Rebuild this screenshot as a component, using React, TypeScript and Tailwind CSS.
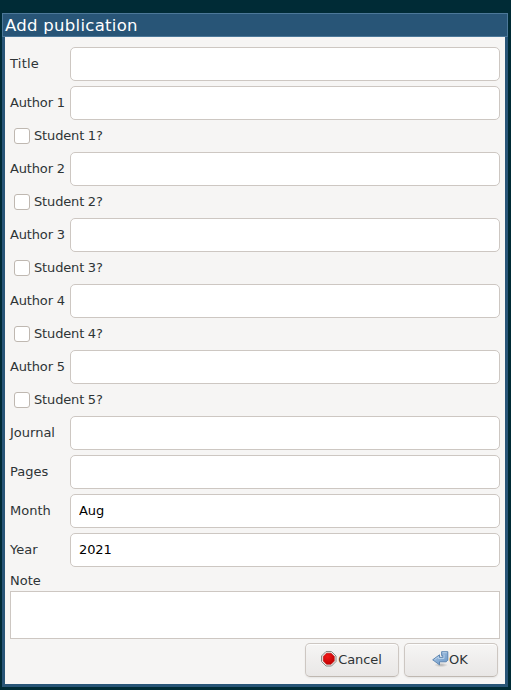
import type { ReactNode } from 'react';

function Field({ label, value = '', type = '' }: { label: string; value?: string; type?: string }) {
  return (
    <label className="flex h-[34px] items-center">
      <span className={`w-[60px] shrink-0 pb-0.5 whitespace-nowrap ${type}`}>{label}</span>
      <input
        className="h-[34px] min-w-0 flex-1 rounded-[5px] border border-[#cdc7c2] bg-white px-2 pb-0.5 tracking-[-0.1px] text-black outline-none"
        defaultValue={value}
      />
    </label>
  );
}

function Check({ label }: { label: string }) {
  return (
    <label className="flex h-[22px] items-center gap-1 pl-1">
      <input
        type="checkbox"
        className="size-4 appearance-none rounded-[3px] border border-[#bfb8b1] bg-white"
      />
      <span className="pb-0.5 tracking-[-0.15px] [word-spacing:-0.3px]">{label}</span>
    </label>
  );
}

function Button({ children }: { children: ReactNode }) {
  return (
    <button className="flex h-[34px] w-[94px] items-center justify-center rounded-[5px] border border-[#cdc7c2] border-b-[#bfb8b1] bg-linear-to-t from-[#e9e7e6] to-[#f6f5f4] pb-0.5 shadow-[inset_0_1px_#ffffffcc,0_1px_2px_#00000012]">
      {children}
    </button>
  );
}

function StopIcon() {
  return (
    <svg width="16" height="16" viewBox="0 0 16 16" className="mr-px">
      <defs>
        <radialGradient id="stop" cx=".38" cy=".3" r=".75">
          <stop offset="0" stopColor="#f01818" />
          <stop offset="1" stopColor="#c00000" />
        </radialGradient>
      </defs>
      <path d="M5 .5h5.5l4.5 4.5v5.5L10.5 15H5L.5 10.5V5Z" fill="#eeeeec" stroke="#888a85" />
      <path
        d="M5.5 2.2h4.6l3.2 3.2v4.7l-3.2 3.2H5.5l-3.2-3.2V5.4Z"
        fill="url(#stop)"
        stroke="#b81010"
        strokeWidth=".6"
      />
    </svg>
  );
}

function ReturnIcon() {
  return (
    <svg width="17" height="17" viewBox="0 0 17 17">
      <defs>
        <linearGradient id="ret" x1="0" y1="0" x2="1" y2="1">
          <stop offset="0" stopColor="#a9c5e3" />
          <stop offset="1" stopColor="#6b98c8" />
        </linearGradient>
        <radialGradient id="shade">
          <stop offset="0" stopColor="#000" stopOpacity=".25" />
          <stop offset="1" stopColor="#000" stopOpacity="0" />
        </radialGradient>
      </defs>
      <ellipse cx="9" cy="14" rx="7" ry="2.2" fill="url(#shade)" />
      <path
        d="M9.6.7h6.2v8.5l-1.6 1.6H7.5v3L.7 8.8l6.8-5v2.5h3.3V4.6H9.6Z"
        fill="url(#ret)"
        stroke="#5680ae"
        strokeWidth=".9"
      />
      <path d="M10.5 1.7h4.3M2.5 8.7l4-3v1.8h5.5V3.6" fill="none" stroke="#c3d7ec" strokeWidth=".8" />
    </svg>
  );
}

export default function App() {
  return (
    <div className="h-[690px] w-[511px] bg-[#002b36] px-0.5 pt-[13px] font-['DejaVu_Sans',sans-serif] text-[13px] leading-[15px] text-[#2e3436]">
      <div className="flex h-[674px] w-[506px] flex-col bg-[#285577]">
        <div className="h-6 shrink-0 border border-[#4c7899] pl-[2px] text-[16.5px] leading-[23px] tracking-[0.28px] text-white">
          Add publication
        </div>
        <div className="mx-[3px] mb-[3px] flex flex-1 flex-col gap-[5px] bg-[#f6f5f4] px-[5px] pt-[10px]">
          <Field label="Title" type="tracking-[0.25px]" />
          {[1, 2, 3, 4, 5].map((n) => (
            <div key={n} className="flex flex-col gap-[5px]">
              <Field label={`Author ${n}`} type="tracking-[-0.15px]" />
              <Check label={`Student ${n}?`} />
            </div>
          ))}
          <Field label="Journal" />
          <Field label="Pages" />
          <Field label="Month" value="Aug" />
          <Field label="Year" value="2021" />
          <label className="flex flex-col gap-[3px] pt-px">
            <span>Note</span>
            <textarea className="h-12 resize-none border border-[#cdc7c2] bg-white outline-none" />
          </label>
          <div className="-mt-px flex justify-end gap-[5px] pr-[2px]">
            <Button>
              <StopIcon />
              <span className="mr-px tracking-[-0.1px]">Cancel</span>
            </Button>
            <Button>
              <ReturnIcon />
              <span className="mr-0.5">OK</span>
            </Button>
          </div>
        </div>
      </div>
    </div>
  );
}
